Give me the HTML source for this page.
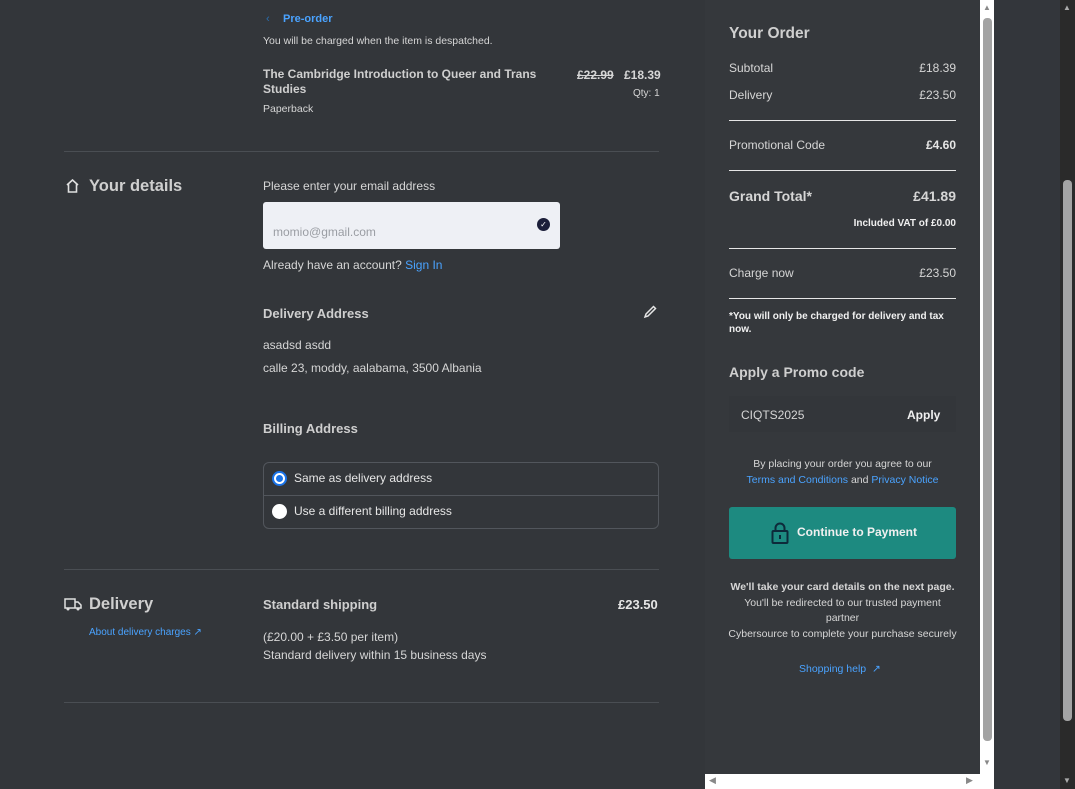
<!DOCTYPE html>
<html><head><meta charset="utf-8"><style>
*{box-sizing:border-box;margin:0;padding:0}
body{width:1075px;height:789px;overflow:hidden;background:#33363a;font-family:"Liberation Sans",sans-serif;color:#d6d6d6;position:relative;font-size:12px}
.a{position:absolute;white-space:nowrap}
.b{font-weight:bold}
.hr{position:absolute;height:1px;background:#4a4e53}
.w{position:absolute;height:1px;background:#e6e6e6;left:729px;width:227px}
.blue{color:#4aa3ff}
</style></head><body>
<div class="a" style="left:0;top:0;width:705px;height:789px;background:#33363a"></div>
<div class="a" style="left:705px;top:0;width:275px;height:774px;background:#35383c"></div>
<!-- left column -->
<div class="a blue b" style="left:283px;top:13px;font-size:11px">Pre-order</div>
<div class="a" style="left:266px;top:13px;font-size:11px;color:#2a6fb0">‹</div>
<div class="a" style="left:263px;top:35px;font-size:10.5px">You will be charged when the item is despatched.</div>
<div class="a b" style="left:263px;top:67px;font-size:12px;line-height:15px;color:#cfcfcf">The Cambridge Introduction to Queer and Trans<br>Studies</div>
<div class="a" style="left:263px;top:103px;font-size:10.5px">Paperback</div>
<div class="a b" style="left:577px;top:68px;font-size:12px;text-decoration:line-through">£22.99</div>
<div class="a b" style="left:624px;top:68px;font-size:12px">£18.39</div>
<div class="a" style="left:633px;top:88px;font-size:10px">Qty: 1</div>
<div class="hr" style="left:64px;top:151px;width:595px"></div>
<svg class="a" style="left:65px;top:179px" width="15" height="14" viewBox="0 0 15 14"><path d="M2 6 L7.5 1 L13 6 M3.5 5 V13 H11.5 V5" fill="none" stroke="#e0e0e0" stroke-width="1.6"/></svg>
<div class="a b" style="left:89px;top:177px;font-size:16.5px;color:#cfcfcf">Your details</div>
<div class="a" style="left:263px;top:179px;font-size:12px">Please enter your email address</div>
<div class="a" style="left:263px;top:202px;width:297px;height:47px;background:#eef0f5;border-radius:3px"></div>
<div class="a" style="left:273px;top:225px;font-size:12px;color:#9a9da3">momio@gmail.com</div>
<div class="a" style="left:537px;top:218px;width:13px;height:13px;border-radius:50%;background:#1c1f3a;color:#fff;font-size:8px;line-height:13px;text-align:center">✓</div>
<div class="a" style="left:263px;top:258px;font-size:12px">Already have an account? <span class="blue b" style="font-weight:normal">Sign In</span></div>
<div class="a b" style="left:263px;top:306px;font-size:13px;color:#cfcfcf">Delivery Address</div>
<svg class="a" style="left:643px;top:304px" width="15" height="15" viewBox="0 0 15 15"><path d="M2 13 L3 10 L10.5 2.5 L12.5 4.5 L5 12 Z" fill="none" stroke="#e6e6e6" stroke-width="1.5"/></svg>
<div class="a" style="left:263px;top:338px;font-size:12px">asadsd asdd</div>
<div class="a" style="left:263px;top:361px;font-size:12px">calle 23, moddy, aalabama, 3500 Albania</div>
<div class="a b" style="left:263px;top:421px;font-size:13px;color:#cfcfcf">Billing Address</div>
<div class="a" style="left:263px;top:462px;width:396px;height:67px;border:1px solid #52565c;border-radius:6px"></div>
<div class="hr" style="left:264px;top:495px;width:394px;background:#52565c"></div>
<div class="a" style="left:272px;top:471px;width:15px;height:15px;border-radius:50%;background:#fff;border:2px solid #1a73e8"><div style="margin:2px;width:7px;height:7px;border-radius:50%;background:#1a73e8"></div></div>
<div class="a" style="left:294px;top:471px;font-size:12px;color:#e6e6e6">Same as delivery address</div>
<div class="a" style="left:272px;top:504px;width:15px;height:15px;border-radius:50%;background:#fff"></div>
<div class="a" style="left:294px;top:504px;font-size:12px;color:#e6e6e6">Use a different billing address</div>
<div class="hr" style="left:64px;top:569px;width:595px"></div>
<svg class="a" style="left:64px;top:598px" width="18" height="13" viewBox="0 0 18 13"><path d="M1 1 H11 V10 H1 Z M11 4 H14 L17 7 V10 H11" fill="none" stroke="#e0e0e0" stroke-width="1.5"/><circle cx="4" cy="11" r="1.5" fill="#e0e0e0"/><circle cx="14" cy="11" r="1.5" fill="#e0e0e0"/></svg>
<div class="a b" style="left:89px;top:595px;font-size:16.5px;color:#cfcfcf">Delivery</div>
<div class="a blue" style="left:89px;top:627px;font-size:10px">About delivery charges <span>↗</span></div>
<div class="a b" style="left:263px;top:597px;font-size:13px;color:#cfcfcf">Standard shipping</div>
<div class="a b" style="left:618px;top:597px;font-size:13px;color:#e6e6e6">£23.50</div>
<div class="a" style="left:263px;top:630px;font-size:12px">(£20.00 + £3.50 per item)</div>
<div class="a" style="left:263px;top:648px;font-size:12px">Standard delivery within 15 business days</div>
<div class="hr" style="left:64px;top:702px;width:595px"></div>
<!-- right panel -->
<div class="a b" style="left:729px;top:25px;font-size:15.5px;color:#cfcfcf">Your Order</div>
<div class="a" style="left:729px;top:61px">Subtotal</div><div class="a" style="right:119px;top:61px">£18.39</div>
<div class="a" style="left:729px;top:88px">Delivery</div><div class="a" style="right:119px;top:88px">£23.50</div>
<div class="w" style="top:120px"></div>
<div class="a" style="left:729px;top:138px">Promotional Code</div><div class="a b" style="right:119px;top:138px;color:#e6e6e6">£4.60</div>
<div class="w" style="top:170px"></div>
<div class="a b" style="left:729px;top:188px;font-size:14px">Grand Total*</div><div class="a b" style="right:119px;top:188px;font-size:14px">£41.89</div>
<div class="a b" style="right:119px;top:218px;font-size:10px;color:#f0f0f0">Included VAT of £0.00</div>
<div class="w" style="top:248px"></div>
<div class="a" style="left:729px;top:266px">Charge now</div><div class="a" style="right:119px;top:266px">£23.50</div>
<div class="w" style="top:298px"></div>
<div class="a b" style="left:729px;top:310px;font-size:10px;line-height:13px;color:#f0f0f0">*You will only be charged for delivery and tax<br>now.</div>
<div class="a b" style="left:729px;top:364px;font-size:14px;color:#cfcfcf">Apply a Promo code</div>
<div class="a" style="left:729px;top:396px;width:227px;height:36px;background:#33363a"></div>
<div class="a" style="left:741px;top:408px">CIQTS2025</div>
<div class="a b" style="left:907px;top:408px;color:#f0f0f0">Apply</div>
<div class="a" style="left:729px;top:456px;width:227px;text-align:center;font-size:10.5px;line-height:16px">By placing your order you agree to our<br><span class="blue">Terms and Conditions</span> and <span class="blue">Privacy Notice</span></div>
<div class="a" style="left:729px;top:507px;width:227px;height:52px;background:#1d8a80;border-radius:3px"></div>
<svg class="a" style="left:771px;top:522px" width="18" height="22" viewBox="0 0 18 22"><path d="M4.5 9 V6 A4.5 4.5 0 0 1 13.5 6 V9" fill="none" stroke="#0d2a3a" stroke-width="2"/><rect x="1.5" y="9" width="15" height="12" rx="1" fill="none" stroke="#0d2a3a" stroke-width="2"/><rect x="8" y="13" width="2" height="4" fill="#0d2a3a"/></svg>
<div class="a b" style="left:797px;top:525px;color:#f0f0f0">Continue to Payment</div>
<div class="a" style="left:726px;top:580px;width:233px;text-align:center;font-size:10.5px;line-height:15.5px"><b>We'll take your card details on the next page.</b><br>You'll be redirected to our trusted payment<br>partner<br>Cybersource to complete your purchase securely</div>
<div class="a blue" style="left:799px;top:663px;font-size:10.5px">Shopping help &nbsp;↗</div>
<!-- inner scrollbars -->
<div class="a" style="left:980px;top:0;width:14px;height:789px;background:#fff"></div>
<div class="a" style="left:983px;top:18px;width:9px;height:723px;background:#a3a3a3;border-radius:4px"></div>
<div class="a" style="left:983px;top:3px;font-size:8px;color:#888">▲</div>
<div class="a" style="left:983px;top:758px;font-size:8px;color:#888">▼</div>
<div class="a" style="left:705px;top:774px;width:275px;height:15px;background:#fff"></div>
<div class="a" style="left:709px;top:775px;font-size:9px;color:#888">◀</div>
<div class="a" style="left:966px;top:775px;font-size:9px;color:#888">▶</div>
<!-- outer -->
<div class="a" style="left:994px;top:0;width:66px;height:789px;background:#33363b"></div>
<div class="a" style="left:1060px;top:0;width:15px;height:789px;background:#2a2a2a"></div>
<div class="a" style="left:1063px;top:180px;width:9px;height:541px;background:#a3a3a3;border-radius:4px"></div>
<div class="a" style="left:1063px;top:3px;font-size:8px;color:#aaa">▲</div>
<div class="a" style="left:1063px;top:776px;font-size:8px;color:#aaa">▼</div>
</body></html>
